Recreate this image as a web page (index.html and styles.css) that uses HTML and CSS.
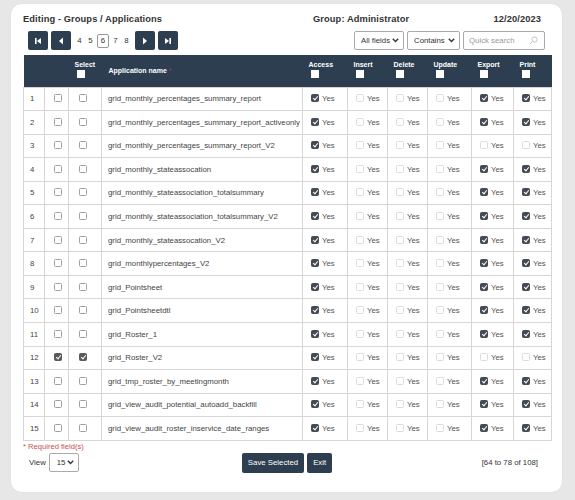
FILE: index.html
```html
<!DOCTYPE html>
<html>
<head>
<meta charset="utf-8">
<link rel="stylesheet" href="styles.css">
</head>
<body>
<div class="card">
  <div class="titlebar">
    <div class="title">Editing - Groups / Applications</div>
    <div class="group">Group: Administrator</div>
    <div class="date">12/20/2023</div>
  </div>
  <div class="toolbar">
    <div class="pager">
      <button class="pbtn"><svg width="8" height="8" viewBox="0 0 8 8"><rect x="1" y="1" width="1.6" height="6" fill="#fff"/><path d="M7 1 L3 4 L7 7 Z" fill="#fff"/></svg></button>
      <button class="pbtn"><svg width="8" height="8" viewBox="0 0 8 8"><path d="M6 0.5 L2 4 L6 7.5 Z" fill="#fff"/></svg></button>
      <span class="pnum">4</span>
      <span class="pnum">5</span>
      <span class="pnum cur">6</span>
      <span class="pnum">7</span>
      <span class="pnum">8</span>
      <button class="pbtn next"><svg width="8" height="8" viewBox="0 0 8 8"><path d="M2 0.5 L6 4 L2 7.5 Z" fill="#fff"/></svg></button>
      <button class="pbtn"><svg width="8" height="8" viewBox="0 0 8 8"><path d="M1 1 L5 4 L1 7 Z" fill="#fff"/><rect x="5.4" y="1" width="1.6" height="6" fill="#fff"/></svg></button>
    </div>
    <div class="filters">
      <div class="sel w50">All fields<svg class="chev" width="7" height="5" viewBox="0 0 7 5"><path d="M0.8 0.8 L3.5 3.6 L6.2 0.8" stroke="#333" stroke-width="1.4" fill="none"/></svg></div>
      <div class="sel w53">Contains<svg class="chev" width="7" height="5" viewBox="0 0 7 5"><path d="M0.8 0.8 L3.5 3.6 L6.2 0.8" stroke="#333" stroke-width="1.4" fill="none"/></svg></div>
      <div class="search"><span class="ph">Quick search</span><svg width="9" height="9" viewBox="0 0 9 9"><circle cx="5.5" cy="3.5" r="2.6" stroke="#bbb" stroke-width="0.9" fill="none"/><path d="M3.6 5.4 L1 8" stroke="#bbb" stroke-width="0.9"/></svg></div>
    </div>
  </div>

  <table class="grid">
    <colgroup>
      <col style="width:21px"><col style="width:24px"><col style="width:33px"><col style="width:201px">
      <col style="width:45px"><col style="width:40px"><col style="width:40px"><col style="width:44px"><col style="width:42px"><col style="width:38px">
    </colgroup>
    <thead>
      <tr>
        <th></th><th></th>
        <th class="stack">Select<span class="hcb"></span></th>
        <th class="name">Application name <span class="req">*</span></th>
        <th class="stack">Access<span class="hcb"></span></th>
        <th class="stack">Insert<span class="hcb"></span></th>
        <th class="stack">Delete<span class="hcb"></span></th>
        <th class="stack">Update<span class="hcb"></span></th>
        <th class="stack">Export<span class="hcb"></span></th>
        <th class="stack">Print<span class="hcb"></span></th>
      </tr>
    </thead>
    <tbody>
      <tr><td>1</td><td class="c"><span class="cb"></span></td><td class="c"><span class="cb"></span></td><td>grid_monthly_percentages_summary_report</td><td class="yes"><span class="cb on"></span>Yes</td><td class="yes"><span class="cb dis"></span>Yes</td><td class="yes"><span class="cb dis"></span>Yes</td><td class="yes"><span class="cb dis"></span>Yes</td><td class="yes"><span class="cb on"></span>Yes</td><td class="yes"><span class="cb on"></span>Yes</td></tr>
      <tr><td>2</td><td class="c"><span class="cb"></span></td><td class="c"><span class="cb"></span></td><td>grid_monthly_percentages_summary_report_activeonly</td><td class="yes"><span class="cb on"></span>Yes</td><td class="yes"><span class="cb dis"></span>Yes</td><td class="yes"><span class="cb dis"></span>Yes</td><td class="yes"><span class="cb dis"></span>Yes</td><td class="yes"><span class="cb on"></span>Yes</td><td class="yes"><span class="cb on"></span>Yes</td></tr>
      <tr><td>3</td><td class="c"><span class="cb"></span></td><td class="c"><span class="cb"></span></td><td>grid_monthly_percentages_summary_report_V2</td><td class="yes"><span class="cb on"></span>Yes</td><td class="yes"><span class="cb dis"></span>Yes</td><td class="yes"><span class="cb dis"></span>Yes</td><td class="yes"><span class="cb dis"></span>Yes</td><td class="yes"><span class="cb dis"></span>Yes</td><td class="yes"><span class="cb dis"></span>Yes</td></tr>
      <tr><td>4</td><td class="c"><span class="cb"></span></td><td class="c"><span class="cb"></span></td><td>grid_monthly_stateassocation</td><td class="yes"><span class="cb on"></span>Yes</td><td class="yes"><span class="cb dis"></span>Yes</td><td class="yes"><span class="cb dis"></span>Yes</td><td class="yes"><span class="cb dis"></span>Yes</td><td class="yes"><span class="cb on"></span>Yes</td><td class="yes"><span class="cb on"></span>Yes</td></tr>
      <tr><td>5</td><td class="c"><span class="cb"></span></td><td class="c"><span class="cb"></span></td><td>grid_monthly_stateassociation_totalsummary</td><td class="yes"><span class="cb on"></span>Yes</td><td class="yes"><span class="cb dis"></span>Yes</td><td class="yes"><span class="cb dis"></span>Yes</td><td class="yes"><span class="cb dis"></span>Yes</td><td class="yes"><span class="cb on"></span>Yes</td><td class="yes"><span class="cb on"></span>Yes</td></tr>
      <tr><td>6</td><td class="c"><span class="cb"></span></td><td class="c"><span class="cb"></span></td><td>grid_monthly_stateassociation_totalsummary_V2</td><td class="yes"><span class="cb on"></span>Yes</td><td class="yes"><span class="cb dis"></span>Yes</td><td class="yes"><span class="cb dis"></span>Yes</td><td class="yes"><span class="cb dis"></span>Yes</td><td class="yes"><span class="cb on"></span>Yes</td><td class="yes"><span class="cb on"></span>Yes</td></tr>
      <tr><td>7</td><td class="c"><span class="cb"></span></td><td class="c"><span class="cb"></span></td><td>grid_monthly_stateassocation_V2</td><td class="yes"><span class="cb on"></span>Yes</td><td class="yes"><span class="cb dis"></span>Yes</td><td class="yes"><span class="cb dis"></span>Yes</td><td class="yes"><span class="cb dis"></span>Yes</td><td class="yes"><span class="cb on"></span>Yes</td><td class="yes"><span class="cb on"></span>Yes</td></tr>
      <tr><td>8</td><td class="c"><span class="cb"></span></td><td class="c"><span class="cb"></span></td><td>grid_monthlypercentages_V2</td><td class="yes"><span class="cb on"></span>Yes</td><td class="yes"><span class="cb dis"></span>Yes</td><td class="yes"><span class="cb dis"></span>Yes</td><td class="yes"><span class="cb dis"></span>Yes</td><td class="yes"><span class="cb on"></span>Yes</td><td class="yes"><span class="cb on"></span>Yes</td></tr>
      <tr><td>9</td><td class="c"><span class="cb"></span></td><td class="c"><span class="cb"></span></td><td>grid_Pointsheet</td><td class="yes"><span class="cb on"></span>Yes</td><td class="yes"><span class="cb dis"></span>Yes</td><td class="yes"><span class="cb dis"></span>Yes</td><td class="yes"><span class="cb dis"></span>Yes</td><td class="yes"><span class="cb on"></span>Yes</td><td class="yes"><span class="cb on"></span>Yes</td></tr>
      <tr><td>10</td><td class="c"><span class="cb"></span></td><td class="c"><span class="cb"></span></td><td>grid_Pointsheetdtl</td><td class="yes"><span class="cb on"></span>Yes</td><td class="yes"><span class="cb dis"></span>Yes</td><td class="yes"><span class="cb dis"></span>Yes</td><td class="yes"><span class="cb dis"></span>Yes</td><td class="yes"><span class="cb on"></span>Yes</td><td class="yes"><span class="cb on"></span>Yes</td></tr>
      <tr><td>11</td><td class="c"><span class="cb"></span></td><td class="c"><span class="cb"></span></td><td>grid_Roster_1</td><td class="yes"><span class="cb on"></span>Yes</td><td class="yes"><span class="cb dis"></span>Yes</td><td class="yes"><span class="cb dis"></span>Yes</td><td class="yes"><span class="cb dis"></span>Yes</td><td class="yes"><span class="cb on"></span>Yes</td><td class="yes"><span class="cb on"></span>Yes</td></tr>
      <tr><td>12</td><td class="c"><span class="cb chk"></span></td><td class="c"><span class="cb chk"></span></td><td>grid_Roster_V2</td><td class="yes"><span class="cb on"></span>Yes</td><td class="yes"><span class="cb dis"></span>Yes</td><td class="yes"><span class="cb dis"></span>Yes</td><td class="yes"><span class="cb dis"></span>Yes</td><td class="yes"><span class="cb dis"></span>Yes</td><td class="yes"><span class="cb dis"></span>Yes</td></tr>
      <tr><td>13</td><td class="c"><span class="cb"></span></td><td class="c"><span class="cb"></span></td><td>grid_tmp_roster_by_meetingmonth</td><td class="yes"><span class="cb on"></span>Yes</td><td class="yes"><span class="cb dis"></span>Yes</td><td class="yes"><span class="cb dis"></span>Yes</td><td class="yes"><span class="cb dis"></span>Yes</td><td class="yes"><span class="cb on"></span>Yes</td><td class="yes"><span class="cb on"></span>Yes</td></tr>
      <tr><td>14</td><td class="c"><span class="cb"></span></td><td class="c"><span class="cb"></span></td><td>grid_view_audit_potential_autoadd_backfill</td><td class="yes"><span class="cb on"></span>Yes</td><td class="yes"><span class="cb dis"></span>Yes</td><td class="yes"><span class="cb dis"></span>Yes</td><td class="yes"><span class="cb dis"></span>Yes</td><td class="yes"><span class="cb on"></span>Yes</td><td class="yes"><span class="cb on"></span>Yes</td></tr>
      <tr><td>15</td><td class="c"><span class="cb"></span></td><td class="c"><span class="cb"></span></td><td>grid_view_audit_roster_inservice_date_ranges</td><td class="yes"><span class="cb on"></span>Yes</td><td class="yes"><span class="cb dis"></span>Yes</td><td class="yes"><span class="cb dis"></span>Yes</td><td class="yes"><span class="cb dis"></span>Yes</td><td class="yes"><span class="cb on"></span>Yes</td><td class="yes"><span class="cb on"></span>Yes</td></tr>
    </tbody>
  </table>

  <div class="required">* Required field(s)</div>
  <div class="footer">
    <div class="view">View <div class="sel w30">15<svg class="chev" width="7" height="5" viewBox="0 0 7 5"><path d="M0.8 0.8 L3.5 3.6 L6.2 0.8" stroke="#333" stroke-width="1.4" fill="none"/></svg></div></div>
    <div class="actions"><button class="btn">Save Selected</button><button class="btn">Exit</button></div>
    <div class="count">[64 to 78 of 108]</div>
  </div>
</div>
</body>
</html>
```

FILE: styles.css
```css
* { box-sizing: border-box; }
html, body { margin: 0; padding: 0; }
body {
  background: #e7e7e7;
  font-family: "Liberation Sans", Arial, sans-serif;
  color: #333;
  width: 575px;
  height: 500px;
  overflow: hidden;
}
.card {
  margin: 4px 0 0 11px;
  width: 551px;
  height: 488px;
  background: #fff;
  border-radius: 10px;
  padding: 8px 11px 0 12px;
  box-shadow: 0 0 1px rgba(0,0,0,0.15);
}
.titlebar {
  display: grid;
  grid-template-columns: 290px 1fr auto;
  height: 14px;
  align-items: center;
  font-weight: bold;
  font-size: 9.3px;
  color: #333;
  letter-spacing: 0.1px;
}
.date { padding-right: 10px; }
.toolbar {
  display: flex;
  justify-content: space-between;
  align-items: center;
  margin-top: 5px;
  height: 19px;
}
.pager {
  display: flex;
  align-items: center;
  padding-left: 5px;
}
.pbtn {
  width: 20px;
  height: 19px;
  border: none;
  border-radius: 2px;
  background: #2d3e50;
  margin-right: 3px;
  padding: 0;
  display: flex;
  align-items: center;
  justify-content: center;
}
.pbtn.next { margin-left: 3px; }
.pnum {
  font-size: 7.8px;
  color: #333;
  width: 11px;
  text-align: center;
  line-height: 11px;
}
.pnum.cur {
  border: 1px solid #999;
  border-radius: 2px;
  width: 12px;
  height: 14px;
  line-height: 12px;
  margin: 0 1px;
}
.filters {
  display: flex;
  gap: 3px;
  padding-right: 6px;
}
.sel {
  height: 19px;
  border: 1px solid #aaa;
  border-radius: 2px;
  font-size: 7.8px;
  color: #333;
  display: flex;
  align-items: center;
  justify-content: space-between;
  padding: 0 4px 0 6px;
}
.sel.w50 { width: 50px; }
.sel.w53 { width: 53px; }
.sel.w30 { width: 30px; height: 19px; padding-left: 7px; }
.chev { display: block; }
.search {
  width: 82px;
  height: 19px;
  border: 1px solid #aaa;
  border-radius: 2px;
  display: flex;
  align-items: center;
  justify-content: space-between;
  padding: 0 6px 0 5px;
}
.ph { font-size: 7.8px; color: #999; }
.grid {
  margin-top: 5px;
  width: 528px;
  table-layout: fixed;
  border-collapse: collapse;
  font-size: 7.8px;
  color: #444;
}
.grid thead tr { background: #2d3e50; height: 32px; }
.grid th {
  color: #fff;
  font-size: 7px;
  font-weight: bold;
  text-align: left;
  padding: 0 0 0 6px;
  vertical-align: middle;
}
.grid th.stack {
  vertical-align: top;
  padding-top: 5px;
  line-height: 9px;
}
.grid th.name { padding-left: 7px; }
.req { color: #b05050; font-weight: normal; opacity: 0.8; }
.hcb {
  display: block;
  width: 8px;
  height: 8px;
  background: #fff;
  margin: 1px 0 0 2px;
}
.grid tbody tr { height: 23.55px; }
.grid td {
  border: 1px solid #d6d6d6;
  padding: 0 0 0 6px;
  white-space: nowrap;
  overflow: hidden;
  vertical-align: middle;
}
.grid td.c { padding-left: 9px; }
.grid td:nth-child(3) { padding-left: 10px; }
.grid td:nth-child(4) { padding-left: 6px; }
.grid td.yes { padding-left: 8px; color: #555; }
.cb {
  display: inline-block;
  width: 8px;
  height: 8px;
  border: 1px solid #a0a0a0;
  border-radius: 1.5px;
  background: #fff;
  vertical-align: -1px;
  position: relative;
}
.yes .cb { margin-right: 3px; }
.cb.dis { border-color: #dcdcdc; }
.cb.on { background: #444b54; border-color: #444b54; }
.cb.chk { background: #5a5a5a; border-color: #5a5a5a; }
.cb.on::after, .cb.chk::after {
  content: "";
  position: absolute;
  left: 2px;
  top: 0px;
  width: 2px;
  height: 4px;
  border: solid #fff;
  border-width: 0 1.3px 1.3px 0;
  transform: rotate(40deg);
}
.required {
  color: #c85050;
  font-size: 7.6px;
  margin-top: 1px;
  height: 9px;
  line-height: 9px;
}
.footer {
  display: grid;
  grid-template-columns: 1fr auto 1fr;
  align-items: center;
  margin-top: 2px;
  width: 528px;
  height: 20px;
}
.view {
  display: flex;
  align-items: center;
  gap: 3px;
  font-size: 7.8px;
  color: #333;
  padding-left: 6px;
}
.actions { display: flex; gap: 3px; }
.btn {
  background: #2d3e50;
  color: #fff;
  border: none;
  border-radius: 2px;
  height: 20px;
  font-family: "Liberation Sans", Arial, sans-serif;
  font-size: 7.8px;
  padding: 0 6px;
}
.count {
  text-align: right;
  font-size: 7.8px;
  color: #333;
  padding-right: 13px;
}
```
